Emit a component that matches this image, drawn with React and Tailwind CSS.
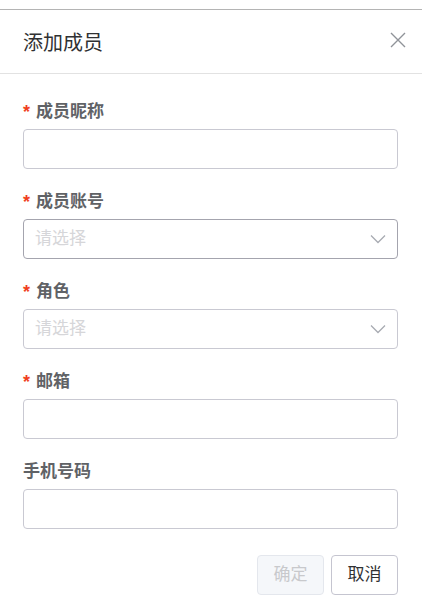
import React from "react";

const FONT = { fontFamily: '"Liberation Sans", "Noto Sans CJK SC", sans-serif' };

function Chevron() {
  return (
    <svg width="16" height="10" viewBox="0 0 16 10" fill="none" className="text-[#a8abb2]">
      <path d="M1 1.5 L8 8.5 L15 1.5" stroke="currentColor" strokeWidth="1.3" />
    </svg>
  );
}

function Field({ label, required, select, dark }) {
  return (
    <div className="mb-[22px]">
      <div className="h-[22px] mb-[6px] flex items-center text-[17px] font-bold text-[#606266] leading-[22px]">
        {required && <span className="text-[#f0401e] mr-[6px] text-[18px] font-bold">*</span>}
        {label}
      </div>
      <div
        className={`h-[40px] rounded-[4px] border bg-white flex items-center justify-between pl-[11px] pr-[11px] ${
          dark ? "border-[#a4a4ae]" : "border-[#c9c9d2]"
        }`}
      >
        {select && (
          <>
            <span className="text-[17px] text-[#d6d6d9]">请选择</span>
            <Chevron />
          </>
        )}
      </div>
    </div>
  );
}

export default function App() {
  return (
    <div className="w-[422px] h-[614px] bg-white pt-[9px]" style={FONT}>
      <div className="border-t border-[#b4b4b4]">
        <div className="h-[64px] flex items-center justify-between pl-[23px] pr-[16px] border-b border-[#e2e2e2] pt-[2px]">
          <span className="text-[20px] text-[#303133]">添加成员</span>
          <svg width="16" height="16" viewBox="0 0 16 16" className="text-[#909399] -mt-[6px]">
            <path d="M1 1 L15 15 M15 1 L1 15" stroke="currentColor" strokeWidth="1.4" />
          </svg>
        </div>
        <div className="pl-[23px] pr-[24px] pt-[27px]">
          <Field label="成员昵称" required />
          <Field label="成员账号" required select dark />
          <Field label="角色" required select />
          <Field label="邮箱" required />
          <Field label="手机号码" />
          <div className="flex justify-end gap-[7px] pt-[4px]">
            <button className="w-[67px] h-[40px] rounded-[4px] border border-[#e4e7ed] bg-[#f5f7fa] text-[17px] text-[#c8c9cc]">
              确定
            </button>
            <button className="w-[67px] h-[40px] rounded-[4px] border border-[#c5c5d0] bg-white text-[17px] text-[#303133]">
              取消
            </button>
          </div>
        </div>
      </div>
    </div>
  );
}
